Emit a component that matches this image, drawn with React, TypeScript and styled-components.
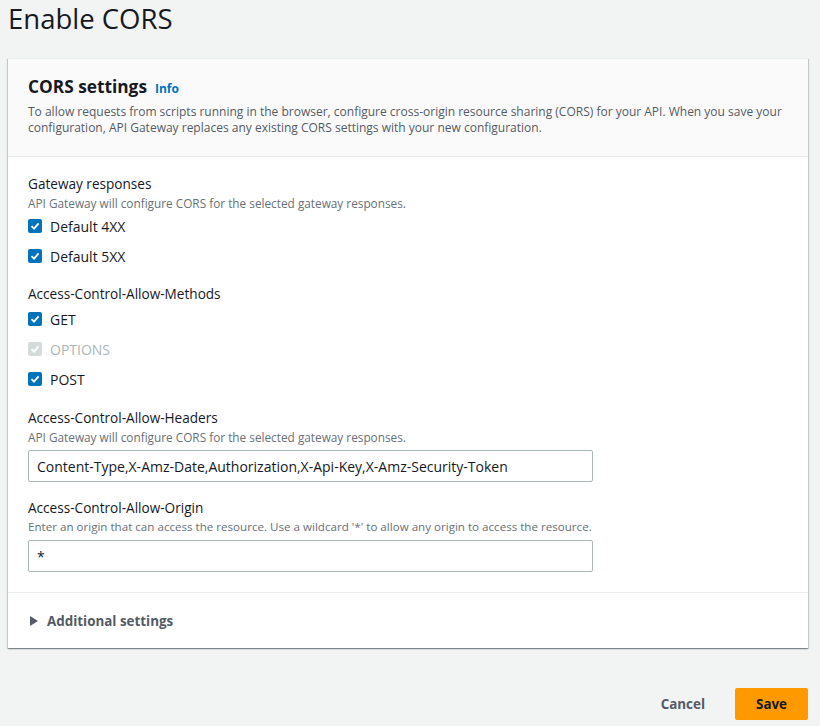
import styled, { createGlobalStyle } from "styled-components";

const Global = createGlobalStyle`
  body {
    margin: 0;
    background: #f2f3f3;
    font-family: "Open Sans", "Noto Sans", sans-serif;
    color: #16191f;
  }
`

const Page = styled.div`
  padding: 0 12px 40px 8px;
`
const Title = styled.h1`
  margin: 0;
  padding-top: 1px;
  font-size: 27.5px;
  line-height: 36px;
  font-weight: 400;
`
const Card = styled.div`
  margin-top: 21px;
  background: #fff;
  box-shadow: 0 1px 1px 0 rgba(0, 28, 36, 0.3), 1px 1px 1px 0 rgba(0, 28, 36, 0.15), -1px 1px 1px 0 rgba(0, 28, 36, 0.15);
  border-top: 1px solid #eaeded;
`
const Header = styled.div`
  background: #fafafa;
  border-bottom: 1px solid #eaeded;
  padding: 17px 20px 20px;
`
const HeaderTitle = styled.h2`
  margin: 0;
  font-size: 17.3px;
  line-height: 22px;
  font-weight: 700;
  display: flex;
  align-items: baseline;
  gap: 8px;
`
const Info = styled.a`
  font-size: 12px;
  font-weight: 700;
  color: #0073bb;
`
const HeaderDesc = styled.p`
  margin: 4px 0 0;
  font-size: 12px;
  line-height: 16px;
  color: #545b64;
`
const Body = styled.div`
  padding: 16px 20px 20px;
  display: flex;
  flex-direction: column;
  gap: 16px;
`
const Field = styled.div<{ $shift?: number }>`
  display: flex;
  flex-direction: column;
  margin-top: ${(p) => p.$shift ?? 0}px;
`
const Label = styled.div`
  font-size: 13.6px;
  line-height: 22px;
`
const Desc = styled.div<{ $narrow?: boolean }>`
  font-size: ${(p) => (p.$narrow ? "11.6px" : "11.8px")};
  line-height: 16px;
  color: #687078;
`
const Checks = styled.div<{ $top?: number }>`
  margin-top: ${(p) => p.$top ?? 4}px;
  display: flex;
  flex-direction: column;
  gap: 8px;
`
const CheckRow = styled.label<{ $disabled?: boolean }>`
  display: flex;
  align-items: center;
  gap: 8px;
  height: 22px;
  font-size: 14px;
  color: ${(p) => (p.$disabled ? "#aab7b8" : "#16191f")};
`
const Box = styled.span<{ $disabled?: boolean }>`
  width: 14px;
  height: 14px;
  border-radius: 2px;
  background: ${(p) => (p.$disabled ? "#d5dbdb" : "#0073bb")};
  display: flex;
  align-items: center;
  justify-content: center;
`
const Input = styled.div`
  margin-top: 5px;
  width: 565px;
  height: 32px;
  box-sizing: border-box;
  border: 1px solid #aab7b8;
  border-radius: 2px;
  padding: 0 8px;
  display: flex;
  align-items: center;
  font-size: 14px;
`
const Expander = styled.div`
  border-top: 1px solid #eaeded;
  padding: 17px 22px 16px 22px;
  display: flex;
  align-items: center;
  gap: 9px;
  font-size: 13.4px;
  line-height: 22px;
  font-weight: 700;
  color: #545b64;
`
const Actions = styled.div`
  margin-top: 40px;
  display: flex;
  justify-content: flex-end;
  align-items: center;
  gap: 10px;
`
const Button = styled.button<{ $primary?: boolean }>`
  height: 32px;
  padding: 0 20px;
  border: none;
  border-radius: 2px;
  font-family: inherit;
  font-size: 13.4px;
  font-weight: 700;
  background: ${(p) => (p.$primary ? "#ff9900" : "transparent")};
  color: ${(p) => (p.$primary ? "#16191f" : "#545b64")};
  width: ${(p) => (p.$primary ? "73px" : "auto")};
`

function Check({ label, disabled }: { label: string; disabled?: boolean }) {
  return (
    <CheckRow $disabled={disabled}>
      <Box $disabled={disabled}>
        <svg width="10" height="10" viewBox="0 0 10 10">
          <path d="M1.5 5.2 L4 7.6 L8.6 2.4" fill="none" stroke="#fff" strokeWidth="1.8" />
        </svg>
      </Box>
      {label}
    </CheckRow>
  )
}

export default function App() {
  return (
    <Page>
      <Global />
      <Title>Enable CORS</Title>
      <Card>
        <Header>
          <HeaderTitle>CORS settings <Info>Info</Info></HeaderTitle>
          <HeaderDesc>
            To allow requests from scripts running in the browser, configure cross-origin resource sharing (CORS) for your API. When you save your
            configuration, API Gateway replaces any existing CORS settings with your new configuration.
          </HeaderDesc>
        </Header>
        <Body>
          <Field>
            <Label>Gateway responses</Label>
            <Desc>API Gateway will configure CORS for the selected gateway responses.</Desc>
            <Checks>
              <Check label="Default 4XX" />
              <Check label="Default 5XX" />
            </Checks>
          </Field>
          <Field>
            <Label>Access-Control-Allow-Methods</Label>
            <Checks $top={3}>
              <Check label="GET" />
              <Check label="OPTIONS" disabled />
              <Check label="POST" />
            </Checks>
          </Field>
          <Field $shift={1}>
            <Label>Access-Control-Allow-Headers</Label>
            <Desc>API Gateway will configure CORS for the selected gateway responses.</Desc>
            <Input>Content-Type,X-Amz-Date,Authorization,X-Api-Key,X-Amz-Security-Token</Input>
          </Field>
          <Field $shift={-1}>
            <Label>Access-Control-Allow-Origin</Label>
            <Desc $narrow>Enter an origin that can access the resource. Use a wildcard '*' to allow any origin to access the resource.</Desc>
            <Input>*</Input>
          </Field>
        </Body>
        <Expander>
          <svg width="8" height="10" viewBox="0 0 8 10">
            <path d="M0 0 L8 5 L0 10 Z" fill="#545b64" />
          </svg>
          Additional settings
        </Expander>
      </Card>
      <Actions>
        <Button>Cancel</Button>
        <Button $primary>Save</Button>
      </Actions>
    </Page>
  )
}
